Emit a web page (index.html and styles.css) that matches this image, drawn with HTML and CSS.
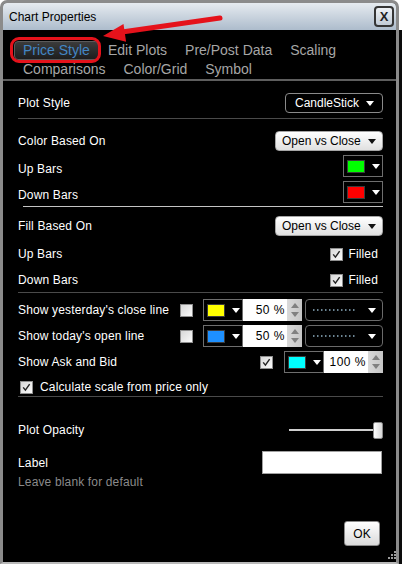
FILE: index.html
```html
<!DOCTYPE html>
<html>
<head>
<meta charset="utf-8">
<title>Chart Properties</title>
<link rel="stylesheet" href="styles.css">
</head>
<body>
<div class="window">
  <div class="titlebar">
    <span class="title">Chart Properties</span>
    <span class="close">X</span>
  </div>
  <div class="content">
    <div class="tabs">
      <span class="tab active">Price Style</span>
      <span class="tab">Edit Plots</span>
      <span class="tab">Pre/Post Data</span>
      <span class="tab">Scaling</span>
      <span class="tab">Comparisons</span>
      <span class="tab">Color/Grid</span>
      <span class="tab">Symbol</span>
    </div>
    <div class="panel">
      <div class="row h20">
        <span>Plot Style</span>
        <div class="select select-dark"><span>CandleStick</span><i class="caret"></i></div>
      </div>
      <div class="sep sep-1"></div>

      <div class="row h20 gap12">
        <span>Color Based On</span>
        <div class="select select-light"><span>Open vs Close</span><i class="caret caret-dark"></i></div>
      </div>
      <div class="row h22 gap4">
        <span class="low">Up Bars</span>
        <div class="picker push"><span class="swatch green"></span><i class="caret"></i></div>
      </div>
      <div class="row h22 gap4">
        <span class="low">Down Bars</span>
        <div class="picker push"><span class="swatch red"></span><i class="caret"></i></div>
      </div>
      <div class="sep sep-2"></div>

      <div class="row h20 gap9">
        <span>Fill Based On</span>
        <div class="select select-light"><span>Open vs Close</span><i class="caret caret-dark"></i></div>
      </div>
      <div class="row h20 gap8">
        <span>Up Bars</span>
        <div class="filled"><span class="cb checked"><svg viewBox="0 0 13 13"><path d="M2.6 6.4 L5.2 9.6 L10.2 2.6" /></svg></span><span>Filled</span></div>
      </div>
      <div class="row h20 gap6">
        <span>Down Bars</span>
        <div class="filled"><span class="cb checked"><svg viewBox="0 0 13 13"><path d="M2.6 6.4 L5.2 9.6 L10.2 2.6" /></svg></span><span>Filled</span></div>
      </div>
      <div class="sep sep-3"></div>

      <div class="row h22 gap6">
        <span class="lbl-fixed">Show yesterday's close line</span>
        <span class="cb"></span>
        <div class="picker after-cb"><span class="swatch yellow"></span><i class="caret"></i></div>
        <div class="num">50 %</div>
        <div class="spin"><i class="up"></i><i class="down"></i></div>
        <div class="linesel"><svg class="dots" width="44" height="2"><line x1="1" y1="1" x2="44" y2="1" /></svg><i class="caret"></i></div>
      </div>
      <div class="row h22 gap4">
        <span class="lbl-fixed">Show today's open line</span>
        <span class="cb"></span>
        <div class="picker after-cb"><span class="swatch blue"></span><i class="caret"></i></div>
        <div class="num">50 %</div>
        <div class="spin"><i class="up"></i><i class="down"></i></div>
        <div class="linesel"><svg class="dots" width="44" height="2"><line x1="1" y1="1" x2="44" y2="1" /></svg><i class="caret"></i></div>
      </div>
      <div class="row h22 gap4">
        <span>Show Ask and Bid</span>
        <span class="cb checked push"><svg viewBox="0 0 13 13"><path d="M2.6 6.4 L5.2 9.6 L10.2 2.6" /></svg></span>
        <div class="picker after-cb2"><span class="swatch cyan"></span><i class="caret"></i></div>
        <div class="num">100 %</div>
        <div class="spin"><i class="up"></i><i class="down"></i></div>
      </div>
      <div class="row h16 gap6">
        <span class="cb checked calc-cb"><svg viewBox="0 0 13 13"><path d="M2.6 6.4 L5.2 9.6 L10.2 2.6" /></svg></span>
        <span class="calc-text">Calculate scale from price only</span>
      </div>
      <div class="sep sep-4"></div>

      <div class="row h20 gap23">
        <span>Plot Opacity</span>
        <div class="slider push"><span class="track"></span><span class="thumb"></span></div>
      </div>
      <div class="row h23 gap11">
        <span>Label</span>
        <div class="textbox push"></div>
      </div>
      <div class="hint">Leave blank for default</div>

      <div class="ok">OK</div>
    </div>
    <svg class="grip" width="10" height="10" viewBox="0 0 10 10">
      <rect x="8" y="0" width="2" height="2"/>
      <rect x="5" y="3" width="2" height="2"/><rect x="8" y="3" width="2" height="2"/>
      <rect x="2" y="6" width="2" height="2"/><rect x="5" y="6" width="2" height="2"/><rect x="8" y="6" width="2" height="2"/>
    </svg>
  </div>
</div>
<svg class="annot" width="402" height="564" viewBox="0 0 402 564">
  <line x1="122" y1="32" x2="220" y2="18" />
  <polygon points="103,36 123.5,23.9 126.1,41.7" />
</svg>
</body>
</html>
```

FILE: styles.css
```css
* { box-sizing: border-box; }
html, body { margin: 0; padding: 0; }
body {
  width: 402px;
  height: 564px;
  overflow: hidden;
  position: relative;
  background: linear-gradient(to bottom, #ffffff 0, #ffffff 30px, #0c0c0c 30px);
  font-family: "Liberation Sans", Arial, sans-serif;
}
.window {
  width: 399px;
  height: 564px;
  border: 3px solid #8b8b8b;
  border-bottom: 2px solid #b9b9b9;
  border-radius: 7px 7px 0 0;
  display: flex;
  flex-direction: column;
  background: #000;
  overflow: hidden;
}
.titlebar {
  height: 27px;
  flex: none;
  display: flex;
  align-items: center;
  justify-content: space-between;
  padding: 0 2px 0 6px;
  background: linear-gradient(#e6ebf0, #adbccc);
}
.title { font-size: 12px; color: #000; padding-top: 1px; }
.close {
  width: 20px;
  height: 21px;
  border: 2px solid #353535;
  border-radius: 4px;
  display: flex;
  align-items: center;
  justify-content: center;
  font-weight: bold;
  font-size: 13px;
  color: #222;
  background: linear-gradient(#eef1f5, #c2ccd7);
}
.content {
  flex: 1;
  display: flex;
  flex-direction: column;
  background: #000;
  position: relative;
}
.tabs {
  display: flex;
  flex-wrap: wrap;
  padding: 11px 0 0 11px;
  border-bottom: 2px solid #5e5e5e;
}
.tab {
  position: relative;
  font-size: 14px;
  line-height: 17px;
  padding: 0 8px;
  border: 1px solid transparent;
  border-radius: 4px;
  color: #a6a6a6;
  white-space: nowrap;
}
.tab.active {
  color: #4386c4;
  background: linear-gradient(#3b3b3b, #1d1d1d);
  border-color: #5a5a5a;
}
.tab.active::after {
  content: "";
  position: absolute;
  left: -5px;
  right: -3px;
  top: -5px;
  bottom: -4px;
  border: 3.5px solid #e5121b;
  border-radius: 9px;
}
.panel {
  flex: 1;
  display: flex;
  flex-direction: column;
  padding: 12px 13px 0 15px;
  font-size: 12px;
  letter-spacing: 0.15px;
  color: #fff;
}
.row { display: flex; align-items: center; flex: none; }
.h16 { height: 16px; }
.h20 { height: 20px; }
.h22 { height: 22px; }
.h23 { height: 23px; }
.gap4 { margin-top: 4px; }
.gap6 { margin-top: 6px; }
.gap8 { margin-top: 8px; }
.gap9 { margin-top: 9px; }
.gap11 { margin-top: 11px; }
.gap12 { margin-top: 12px; }
.gap23 { margin-top: 23px; }
.push { margin-left: auto; }
.low { padding-top: 6px; }

.sep { height: 1px; flex: none; background: #4a4a4a; }
.sep-1 { margin-top: 5px; }
.sep-2 { margin-top: 3px; margin-left: 5px; background: #c4c4c4; }
.sep-3 { margin-top: 2px; }
.sep-4 { margin-top: 1px; }

.select {
  margin-left: auto;
  height: 20px;
  display: flex;
  align-items: center;
  justify-content: space-between;
  border-radius: 4px;
  letter-spacing: 0;
}
.select-dark {
  width: 98px;
  padding: 0 8px 0 9px;
  background: #000;
  border: 1px solid #8a8a8a;
  color: #fff;
}
.select-light {
  width: 108px;
  padding: 0 6px 0 6px;
  background: linear-gradient(#ffffff, #e0e0e0);
  border: 1px solid #a5a5a5;
  color: #000;
}
.caret {
  display: block;
  width: 0;
  height: 0;
  border-left: 4px solid transparent;
  border-right: 4px solid transparent;
  border-top: 5px solid #fff;
}
.caret-dark { border-top-color: #111; }

.picker {
  width: 40px;
  height: 22px;
  flex: none;
  border: 1px solid #6e6e6e;
  background: #000;
  display: flex;
  align-items: center;
  justify-content: space-between;
  padding: 0 2px 0 3px;
}
.swatch { width: 18px; height: 13px; border: 1px solid #3c3c3c; }
.green { background: #00ff00; }
.red { background: #ff0000; }
.yellow { background: #ffff00; }
.blue { background: #1e90ff; }
.cyan { background: #00ffff; }

.cb {
  width: 13px;
  height: 13px;
  flex: none;
  border: 1px solid #8f8f8f;
  background: linear-gradient(135deg, #d8d8d8, #fbfbfb);
  display: flex;
}
.cb svg { width: 11px; height: 11px; }
.cb path { fill: none; stroke: #222; stroke-width: 1.7; }
.filled { margin-left: auto; margin-right: 5px; display: flex; align-items: center; gap: 5px; }

.lbl-fixed { width: 162px; flex: none; white-space: nowrap; }
.after-cb { margin-left: 10px; }
.after-cb2 { margin-left: 11px; }
.num {
  width: 44px;
  height: 22px;
  flex: none;
  background: #fff;
  color: #000;
  display: flex;
  align-items: center;
  justify-content: flex-end;
  padding-right: 2px;
  letter-spacing: 0.5px;
}
.spin {
  width: 15px;
  height: 22px;
  flex: none;
  background: linear-gradient(90deg, #d9d9d9, #c5c5c5);
  display: flex;
  flex-direction: column;
  align-items: center;
  justify-content: space-between;
  padding: 4px 0 4px;
}
.spin i { display: block; width: 0; height: 0; border-left: 4px solid transparent; border-right: 4px solid transparent; }
.spin .up { border-bottom: 5px solid #808080; }
.spin .down { border-top: 5px solid #808080; }
.linesel {
  width: 78px;
  height: 22px;
  flex: none;
  margin-left: 3px;
  border: 1px solid #6a6a6a;
  border-radius: 4px;
  display: flex;
  align-items: center;
  justify-content: space-between;
  padding: 0 6px 0 6px;
}
.dots line { stroke: #8fb0c2; stroke-width: 1.5; stroke-dasharray: 1.5 2.5; }

.calc-cb { margin-left: 2px; }
.calc-text { margin-left: 7px; }

.slider { display: flex; align-items: center; }
.track { width: 84px; height: 2px; background: #cfcfcf; }
.thumb {
  width: 10px;
  height: 17px;
  border: 1px solid #8a8a8a;
  border-radius: 2px;
  background: linear-gradient(90deg, #ffffff, #d6d6d6);
}
.textbox {
  width: 120px;
  height: 23px;
  margin-right: 1px;
  background: #fff;
  border: 1px solid #a0a0a0;
}
.hint {
  margin-top: 1px;
  height: 14px;
  line-height: 14px;
  color: #8a8a8a;
  flex: none;
}
.ok {
  align-self: flex-end;
  margin-top: 32px;
  margin-right: 3px;
  width: 36px;
  height: 25px;
  border: 1px solid #8a8a8a;
  border-radius: 3px;
  background: linear-gradient(#ffffff, #dadada);
  color: #000;
  display: flex;
  align-items: center;
  justify-content: center;
  letter-spacing: 0;
}
.grip { position: absolute; right: 0; bottom: 1px; }
.grip rect { fill: #9a9a9a; }

.annot { position: absolute; left: 0; top: 0; pointer-events: none; }
.annot line { stroke: #e5121b; stroke-width: 5; stroke-linecap: round; }
.annot polygon { fill: #e5121b; }
```
